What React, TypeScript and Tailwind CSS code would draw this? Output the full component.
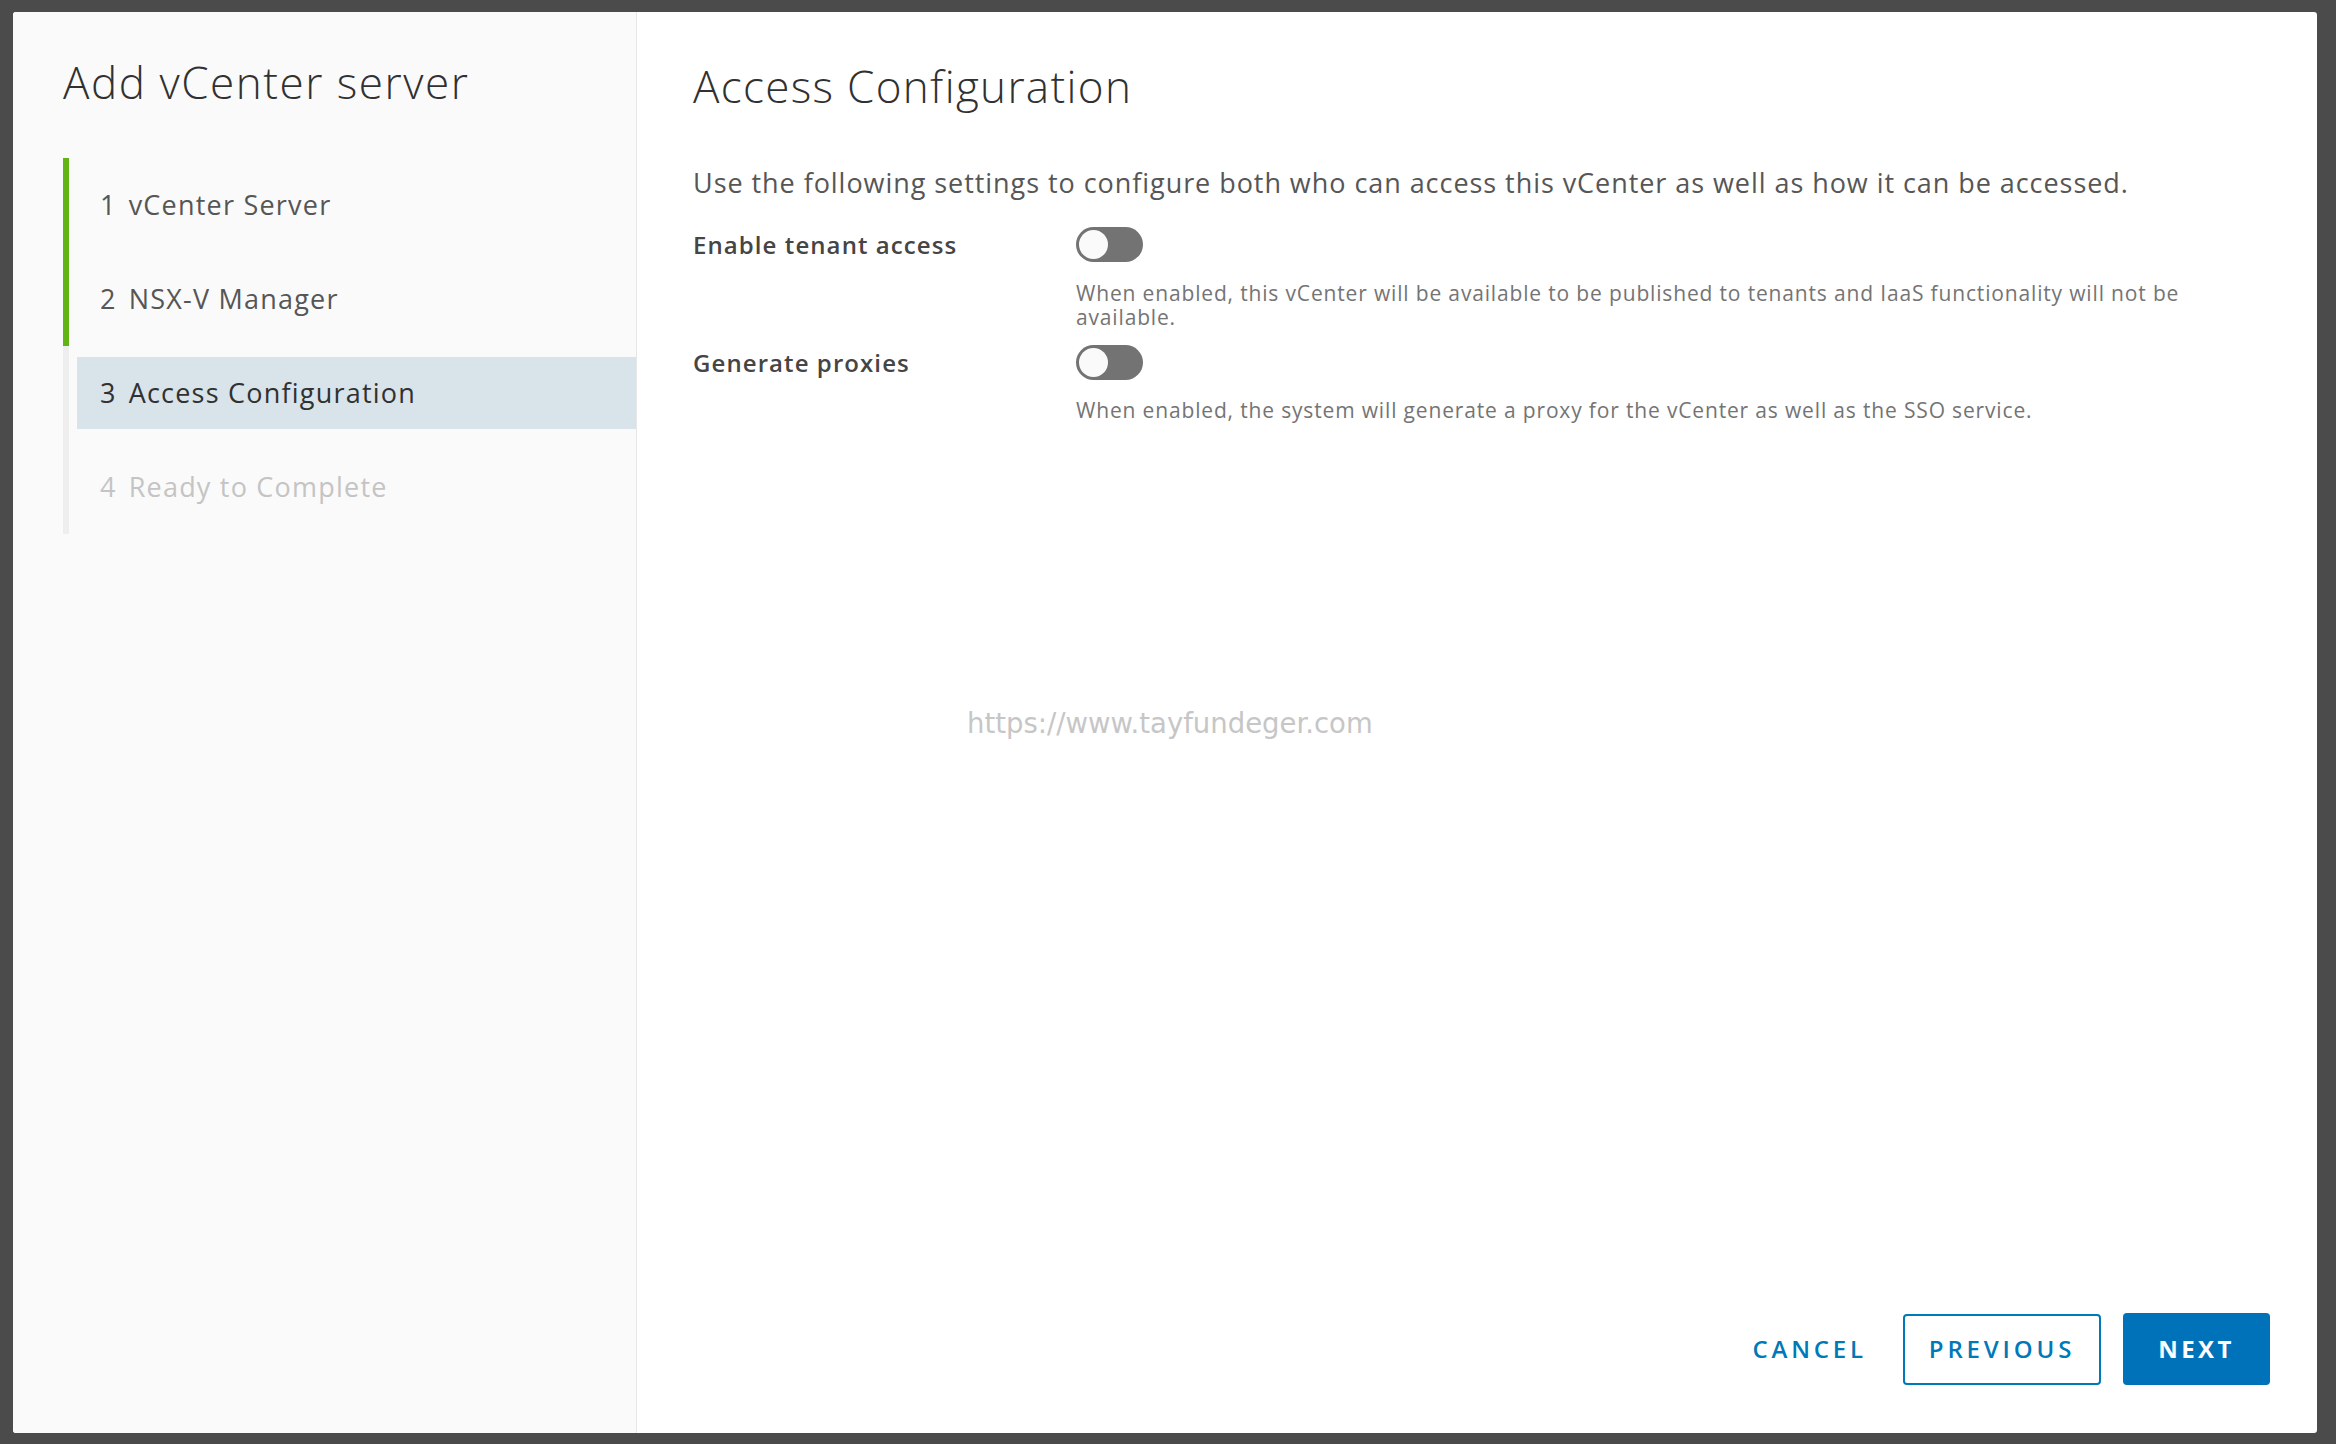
import React from 'react';

const steps = [
  { n: 1, label: 'vCenter Server', state: 'done' },
  { n: 2, label: 'NSX-V Manager', state: 'done' },
  { n: 3, label: 'Access Configuration', state: 'active' },
  { n: 4, label: 'Ready to Complete', state: 'todo' },
];

function Toggle() {
  return (
    <div className="relative w-[67px] h-[35px] rounded-full bg-[#737373]">
      <div className="absolute left-[3px] top-[3px] w-[29px] h-[29px] rounded-full bg-[#fafafa]" />
    </div>
  );
}

export default function App() {
  const font = { fontFamily: '"Open Sans", Lato, sans-serif' };
  return (
    <div className="w-[2336px] h-[1444px] bg-[#4b4b4b] pt-[12px] pl-[13px] pr-[19px] pb-[11px]" style={font}>
      <div className="relative flex h-full w-full bg-white rounded-[3px] overflow-hidden">
        {/* wizard nav */}
        <div className="w-[624px] shrink-0 bg-[#fafafa] border-r border-[#e6e6e6] pt-[45px]">
          <h1 className="pl-[50px] text-[44px] leading-[50px] font-light tracking-[0.035em] text-[#313131]">Add vCenter server</h1>
          <div className="mt-[51px] ml-[50px]">
            {steps.map((s) => (
              <div
                key={s.n}
                className={`h-[94px] flex items-center border-l-[6px] ${s.state === 'done' ? 'border-[#60b515]' : 'border-[#eeeeee]'}`}
              >
                <div
                  className={`flex items-center gap-[12px] w-full ml-[8px] h-[72px] pl-[23px] text-[27px] tracking-[0.045em] ${
                    s.state === 'active'
                      ? 'bg-[#d8e3ea] text-[#313131]'
                      : s.state === 'done'
                      ? 'text-[#565656]'
                      : 'text-[#c4c4c4]'
                  }`}
                >
                  <span>{s.n}</span>
                  <span>{s.label}</span>
                </div>
              </div>
            ))}
          </div>
        </div>

        {/* content */}
        <div className="flex-1 flex flex-col pl-[56px] pr-[47px] pt-[49px] pb-[48px]">
          <h2 className="text-[44px] leading-[50px] font-light tracking-[0.03em] text-[#313131]">Access Configuration</h2>
          <p className="mt-[54px] text-[27px] leading-[36px] tracking-[0.035em] text-[#565656]">
            Use the following settings to configure both who can access this vCenter as well as how it can be accessed.
          </p>

          <div className="mt-[26px] flex">
            <div className="w-[383px] shrink-0 h-[35px] flex items-center text-[24px] font-semibold tracking-[0.045em] text-[#454545]">Enable tenant access</div>
            <div className="flex-1">
              <Toggle />
              <p className="mt-[19px] max-w-[1110px] text-[21px] leading-[24px] tracking-[0.04em] text-[#747474]">
                When enabled, this vCenter will be available to be published to tenants and IaaS functionality will not be available.
              </p>
            </div>
          </div>

          <div className="mt-[16px] flex">
            <div className="w-[383px] shrink-0 h-[35px] flex items-center text-[24px] font-semibold tracking-[0.045em] text-[#454545]">Generate proxies</div>
            <div className="flex-1">
              <Toggle />
              <p className="mt-[18px] text-[21px] leading-[24px] tracking-[0.04em] text-[#747474]">
                When enabled, the system will generate a proxy for the vCenter as well as the SSO service.
              </p>
            </div>
          </div>

          <div className="mt-auto flex justify-end items-center">
            <button className="h-[71px] px-[26px] mr-[10px] text-[24px] font-semibold tracking-[0.16em] text-[#0079b8]">CANCEL</button>
            <button className="h-[71px] w-[198px] border-2 border-[#0079b8] rounded-[4px] text-[24px] font-semibold tracking-[0.16em] text-[#0079b8]">PREVIOUS</button>
            <button className="ml-[22px] h-[72px] w-[147px] rounded-[4px] bg-[#0072b9] text-[24px] font-bold tracking-[0.14em] text-white">NEXT</button>
          </div>
        </div>

        {/* watermark */}
        <div
          className="absolute left-[954px] top-[691px] text-[27.5px] text-[#c6c6c6]"
          style={{ fontFamily: '"DejaVu Sans", sans-serif' }}
        >
          https://www.tayfundeger.com
        </div>
      </div>
    </div>
  );
}
